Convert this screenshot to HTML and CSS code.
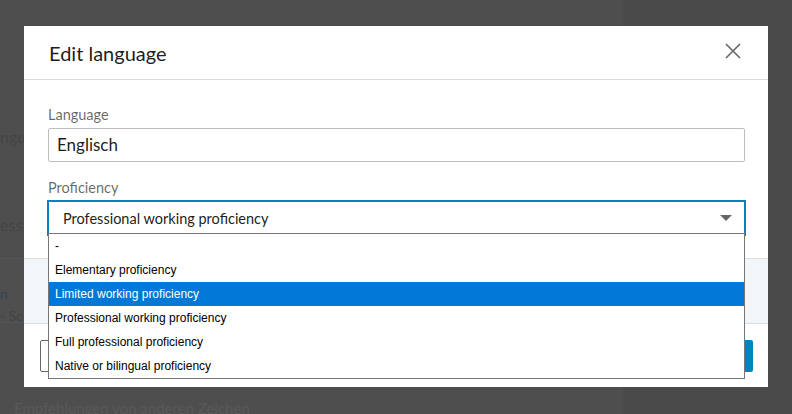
FILE: index.html
```html
<!DOCTYPE html>
<html lang="en">
<head>
<meta charset="utf-8">
<title>Edit language</title>
<link rel="stylesheet" href="styles.css">
</head>
<body>
<div class="page">
  <div class="page-main">
    <div class="bg-row bg-row-1"><span class="bg-clip">ngu</span></div>
    <div class="bg-row bg-row-2"><span class="bg-clip">ess</span></div>
    <div class="bg-band">
      <div class="bg-link"><span class="bg-clip">n</span></div>
      <div class="bg-sub"><span class="bg-clip">- Sc</span></div>
    </div>
    <div class="bg-foot">Empfehlungen von anderen Zeichen</div>
  </div>
  <div class="page-side"></div>
</div>

<div class="overlay">
  <div class="modal">
    <div class="modal-header">
      <h2 class="modal-title">Edit language</h2>
      <button class="close-btn" aria-label="Close">
        <svg width="16" height="16" viewBox="0 0 16 16"><path d="M1 1 L15 15 M15 1 L1 15" stroke="#666" stroke-width="1.6" fill="none"/></svg>
      </button>
    </div>
    <div class="modal-body">
      <label class="field-label">Language</label>
      <div class="text-input">Englisch</div>
      <label class="field-label label-2">Proficiency</label>
      <div class="select-wrap">
        <div class="select-box">
          <span>Professional working proficiency</span>
          <svg class="caret" width="12" height="6" viewBox="0 0 12 6"><path d="M0 0 H12 L6 6 Z" fill="#666"/></svg>
        </div>
        <ul class="dropdown">
          <li>-</li>
          <li>Elementary proficiency</li>
          <li class="selected">Limited working proficiency</li>
          <li>Professional working proficiency</li>
          <li>Full professional proficiency</li>
          <li>Native or bilingual proficiency</li>
        </ul>
      </div>
    </div>
    <div class="modal-section"></div>
    <div class="modal-footer">
      <button class="btn-secondary"></button>
      <button class="btn-primary"></button>
    </div>
  </div>
</div>
</body>
</html>
```

FILE: styles.css
```css
html, body {
  margin: 0;
  padding: 0;
}
body {
  width: 792px;
  height: 414px;
  overflow: hidden;
  background: #4d4d4d;
  font-family: Lato, "Open Sans", sans-serif;
  position: relative;
}
.page {
  display: flex;
  height: 414px;
}
.page-main {
  width: 623px;
  background: #4e4e4e;
  display: flex;
  flex-direction: column;
  padding-top: 127px;
  box-sizing: border-box;
}
.page-main > * {
  flex-shrink: 0;
}
.page-side {
  flex: 1;
  background: #4a4a4a;
}
.bg-row {
  color: #444444;
  font-size: 16px;
  line-height: 20px;
  height: 88px;
}
.bg-row-2 {
  height: 43px;
}
.bg-clip {
  display: inline-block;
}
.bg-band {
  border-top: 1px solid #565656;
  border-bottom: 1px solid #565656;
  background: #4f4f4f;
  padding-top: 26px;
  height: 37px;
}
.bg-link {
  color: #2d4654;
  font-size: 14px;
  line-height: 18px;
}
.bg-sub {
  color: #434343;
  font-size: 14px;
  line-height: 18px;
  margin-top: 4px;
}
.bg-foot {
  margin-top: 76px;
  margin-left: 14px;
  color: #595959;
  font-size: 15px;
  line-height: 18px;
  white-space: nowrap;
}

.overlay {
  position: absolute;
  left: 24px;
  top: 26px;
}
.modal {
  width: 744px;
  height: 361px;
  background: #fff;
  display: flex;
  flex-direction: column;
}
.modal-header {
  height: 53px;
  border-bottom: 1px solid #dcdcdc;
  display: flex;
  align-items: center;
  justify-content: space-between;
  padding: 0 23px 0 25px;
}
.modal-title {
  margin: 0;
  font-weight: 400;
  font-size: 20px;
  color: rgba(0,0,0,.9);
}
.close-btn {
  width: 24px;
  height: 24px;
  border: 0;
  background: none;
  padding: 0;
  display: flex;
  align-items: center;
  justify-content: center;
  margin-top: -4px;
}
.modal-body {
  padding: 25px 23px 0 24px;
  display: flex;
  flex-direction: column;
}
.field-label {
  font-size: 14.5px;
  line-height: 20px;
  color: rgba(0,0,0,.6);
  margin-bottom: 3px;
}
.label-2 {
  margin-top: 16px;
}
.text-input {
  height: 32px;
  border: 1px solid #bdbdbd;
  border-radius: 2px;
  padding-left: 8px;
  font-size: 17px;
  line-height: 32px;
  color: rgba(0,0,0,.9);
}
.select-wrap {
  position: relative;
}
.select-box {
  height: 32px;
  border: 1px solid #0084bf;
  box-shadow: 0 0 0 1px #0084bf;
  display: flex;
  align-items: center;
  justify-content: space-between;
  padding: 0 12px 0 14px;
  font-size: 14.5px;
  color: rgba(0,0,0,.9);
}
.dropdown {
  position: absolute;
  left: 0;
  top: 32px;
  width: 697px;
  box-sizing: border-box;
  margin: 0;
  padding: 0;
  list-style: none;
  border: 1px solid #767676;
  background: #fff;
  font-family: "Liberation Sans", Arial, sans-serif;
  font-size: 12px;
  color: #000;
}
.dropdown li {
  height: 24px;
  line-height: 25px;
  padding-left: 6px;
}
.dropdown li.selected {
  background: #0078d7;
  color: #fff;
}
.modal-section {
  margin-top: 23px;
  height: 64px;
  border-top: 1px solid #dcdcdc;
  border-bottom: 1px solid #dcdcdc;
  background: #f3f6f8;
}
.modal-footer {
  display: flex;
  justify-content: space-between;
  padding: 16px 15px 0 16px;
}
.btn-secondary {
  height: 32px;
  width: 110px;
  border: 1px solid #666;
  border-radius: 2px;
  background: #fff;
}
.btn-primary {
  height: 32px;
  width: 90px;
  border: 0;
  border-radius: 2px;
  background: #0084bf;
}
```
